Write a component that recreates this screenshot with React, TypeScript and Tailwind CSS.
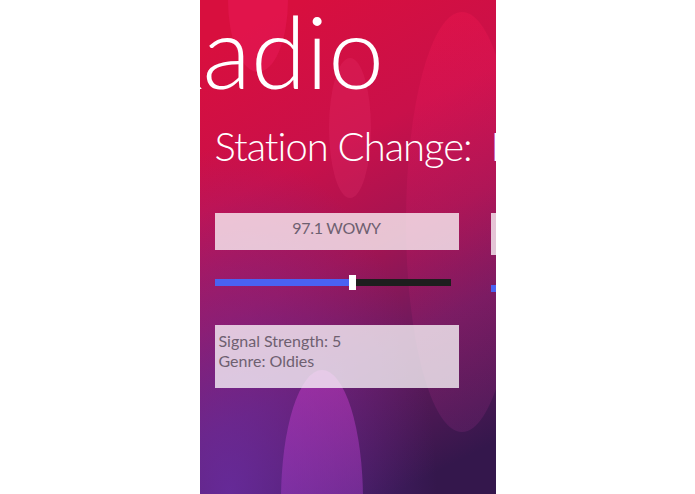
import React from 'react';

const font = { fontFamily: 'Lato, "Open Sans", sans-serif' };

function Backdrop() {
  return (
    <svg
      className="absolute inset-0 h-full w-full"
      viewBox="0 0 296 494"
      preserveAspectRatio="none"
    >
      <defs>
        <linearGradient id="bg" x1="0.35" y1="0" x2="0.65" y2="1">
          <stop offset="0" stopColor="#d80f3e" />
          <stop offset="0.3" stopColor="#c9104a" />
          <stop offset="0.52" stopColor="#a31452" />
          <stop offset="0.72" stopColor="#6c1a5e" />
          <stop offset="1" stopColor="#34174c" />
        </linearGradient>
        <radialGradient id="glow" cx="0.1" cy="1" r="0.7">
          <stop offset="0" stopColor="#6a2ea8" stopOpacity="0.8" />
          <stop offset="1" stopColor="#6a2ea8" stopOpacity="0" />
        </radialGradient>
        <linearGradient id="bottomBlob" x1="0" y1="0" x2="0" y2="1">
          <stop offset="0" stopColor="#c03ac0" stopOpacity="0.55" />
          <stop offset="1" stopColor="#7a3ac0" stopOpacity="0.45" />
        </linearGradient>
        <linearGradient id="bigBlob" x1="0" y1="0" x2="0" y2="1">
          <stop offset="0" stopColor="#ff1a55" stopOpacity="0.25" />
          <stop offset="0.6" stopColor="#e0207a" stopOpacity="0.14" />
          <stop offset="1" stopColor="#a03090" stopOpacity="0.2" />
        </linearGradient>
      </defs>
      <rect width="296" height="494" fill="url(#bg)" />
      <rect width="296" height="494" fill="url(#glow)" />
      <ellipse cx="58" cy="0" rx="30" ry="72" fill="#f5206a" opacity="0.3" />
      <ellipse cx="150" cy="128" rx="21" ry="70" fill="#f03a78" opacity="0.2" />
      <ellipse cx="262" cy="222" rx="56" ry="210" fill="url(#bigBlob)" />
      <ellipse cx="122" cy="500" rx="41" ry="130" fill="url(#bottomBlob)" />
    </svg>
  );
}

function Slider({ value }: { value: number }) {
  return (
    <div className="relative flex h-[15px] w-[236px] items-center">
      <div className="h-[7px] bg-[#4a62f2]" style={{ width: `${value}%` }} />
      <div className="h-[15px] w-[7px] bg-white" />
      <div className="h-[7px] flex-1 bg-[#1e1e1e]" />
    </div>
  );
}

export default function App() {
  return (
    <div className="flex h-[494px] w-[695px] justify-center bg-white" style={font}>
      <div className="relative h-[494px] w-[296px] overflow-hidden">
        <Backdrop />
        <div className="relative flex flex-col">
          <div className="ml-[-57px] h-[100px] whitespace-nowrap text-[100px] font-light leading-[100px] text-white">
            Radio
          </div>
          <div className="flex pl-[15px]">
            <div className="flex w-[276px] shrink-0 flex-col">
              <div className="mt-[26px] h-[40px] whitespace-nowrap text-[40px] font-light leading-[40px] tracking-[-1px] text-white">
                Station Change:
              </div>
              <div className="mt-[47px] h-[37px] w-[244px] bg-white/75 pt-[5px] text-center text-[16px] leading-[20px] tracking-[-0.3px] text-[#6e6070]">
                97.1 WOWY
              </div>
              <div className="mt-[25px]">
                <Slider value={56.8} />
              </div>
              <div className="mt-[35px] h-[63px] w-[244px] bg-white/75 pl-[4px] pt-[6px] text-[16px] leading-[20px] text-[#6e6070]">
                <div>Signal Strength: 5</div>
                <div>Genre: Oldies</div>
              </div>
            </div>
            <div className="flex shrink-0 flex-col">
              <div className="mt-[26px] h-[40px] whitespace-nowrap text-[40px] font-light leading-[40px] tracking-[-1px] text-white">
                Presets:
              </div>
              <div className="mt-[47px] h-[42px] w-[244px] bg-white/75" />
              <div className="mt-[30px] h-[7px] w-[60px] bg-[#4a62f2]" />
            </div>
          </div>
        </div>
      </div>
    </div>
  );
}
